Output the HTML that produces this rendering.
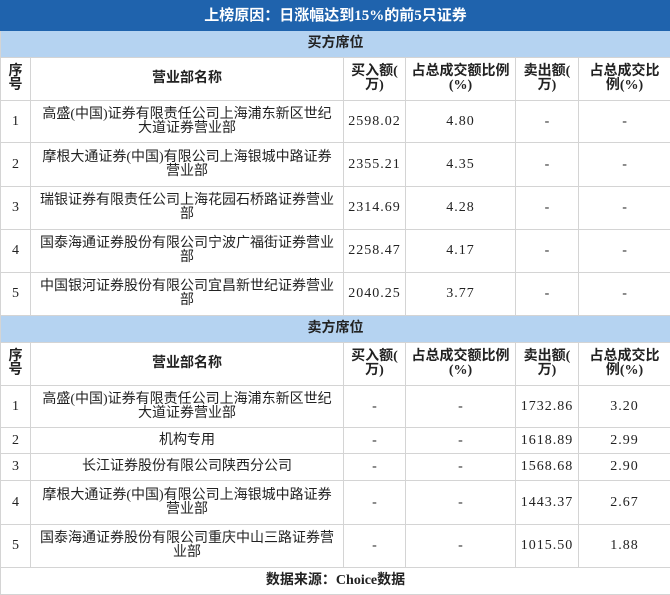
<!DOCTYPE html>
<html><head><meta charset="utf-8"><style>
*{margin:0;padding:0;box-sizing:border-box}
body{width:670px;height:595px;background:#fff;font-family:"Liberation Serif","Noto Sans CJK SC",sans-serif;font-size:14px;color:#222;overflow:hidden}
table{border-collapse:collapse;table-layout:fixed;width:670px}
td{border:1px solid #d4d4d4;text-align:center;vertical-align:middle;line-height:14px;padding:0;overflow:hidden;white-space:nowrap}
.t{background:#1f63ad;color:#fff;font-weight:bold;font-size:15px;height:30px;border-color:#1f63ad}
.s{background:#b5d3f1;font-weight:bold;height:27px}
.h td{font-weight:bold;height:43px}
.n{font-family:"Liberation Serif",serif;font-size:14px;letter-spacing:1px}
.f{font-weight:bold;height:27px}
</style></head><body>
<table>
<colgroup><col style="width:30px"><col style="width:313px"><col style="width:62px"><col style="width:110px"><col style="width:63px"><col style="width:92px"></colgroup>
<tr><td colspan="6" class="t">上榜原因：日涨幅达到15%的前5只证券</td></tr>
<tr><td colspan="6" class="s">买方席位</td></tr>
<tr class="h"><td>序<br>号</td><td>营业部名称</td><td>买入额(<br>万)</td><td>占总成交额比例<br>(%)</td><td>卖出额(<br>万)</td><td>占总成交比<br>例(%)</td></tr>
<tr style="height:42px"><td>1</td><td>高盛(中国)证券有限责任公司上海浦东新区世纪<br>大道证券营业部</td><td class="n">2598.02</td><td class="n">4.80</td><td>-</td><td>-</td></tr>
<tr style="height:44px"><td>2</td><td>摩根大通证券(中国)有限公司上海银城中路证券<br>营业部</td><td class="n">2355.21</td><td class="n">4.35</td><td>-</td><td>-</td></tr>
<tr style="height:43px"><td>3</td><td>瑞银证券有限责任公司上海花园石桥路证券营业<br>部</td><td class="n">2314.69</td><td class="n">4.28</td><td>-</td><td>-</td></tr>
<tr style="height:43px"><td>4</td><td>国泰海通证券股份有限公司宁波广福街证券营业<br>部</td><td class="n">2258.47</td><td class="n">4.17</td><td>-</td><td>-</td></tr>
<tr style="height:43px"><td>5</td><td>中国银河证券股份有限公司宜昌新世纪证券营业<br>部</td><td class="n">2040.25</td><td class="n">3.77</td><td>-</td><td>-</td></tr>
<tr><td colspan="6" class="s">卖方席位</td></tr>
<tr class="h"><td>序<br>号</td><td>营业部名称</td><td>买入额(<br>万)</td><td>占总成交额比例<br>(%)</td><td>卖出额(<br>万)</td><td>占总成交比<br>例(%)</td></tr>
<tr style="height:42px"><td>1</td><td>高盛(中国)证券有限责任公司上海浦东新区世纪<br>大道证券营业部</td><td>-</td><td>-</td><td class="n">1732.86</td><td class="n">3.20</td></tr>
<tr style="height:26px"><td>2</td><td>机构专用</td><td>-</td><td>-</td><td class="n">1618.89</td><td class="n">2.99</td></tr>
<tr style="height:27px"><td>3</td><td>长江证券股份有限公司陕西分公司</td><td>-</td><td>-</td><td class="n">1568.68</td><td class="n">2.90</td></tr>
<tr style="height:44px"><td>4</td><td>摩根大通证券(中国)有限公司上海银城中路证券<br>营业部</td><td>-</td><td>-</td><td class="n">1443.37</td><td class="n">2.67</td></tr>
<tr style="height:43px"><td>5</td><td>国泰海通证券股份有限公司重庆中山三路证券营<br>业部</td><td>-</td><td>-</td><td class="n">1015.50</td><td class="n">1.88</td></tr>
<tr><td colspan="6" class="f">数据来源：Choice数据</td></tr>
</table>
</body></html>
